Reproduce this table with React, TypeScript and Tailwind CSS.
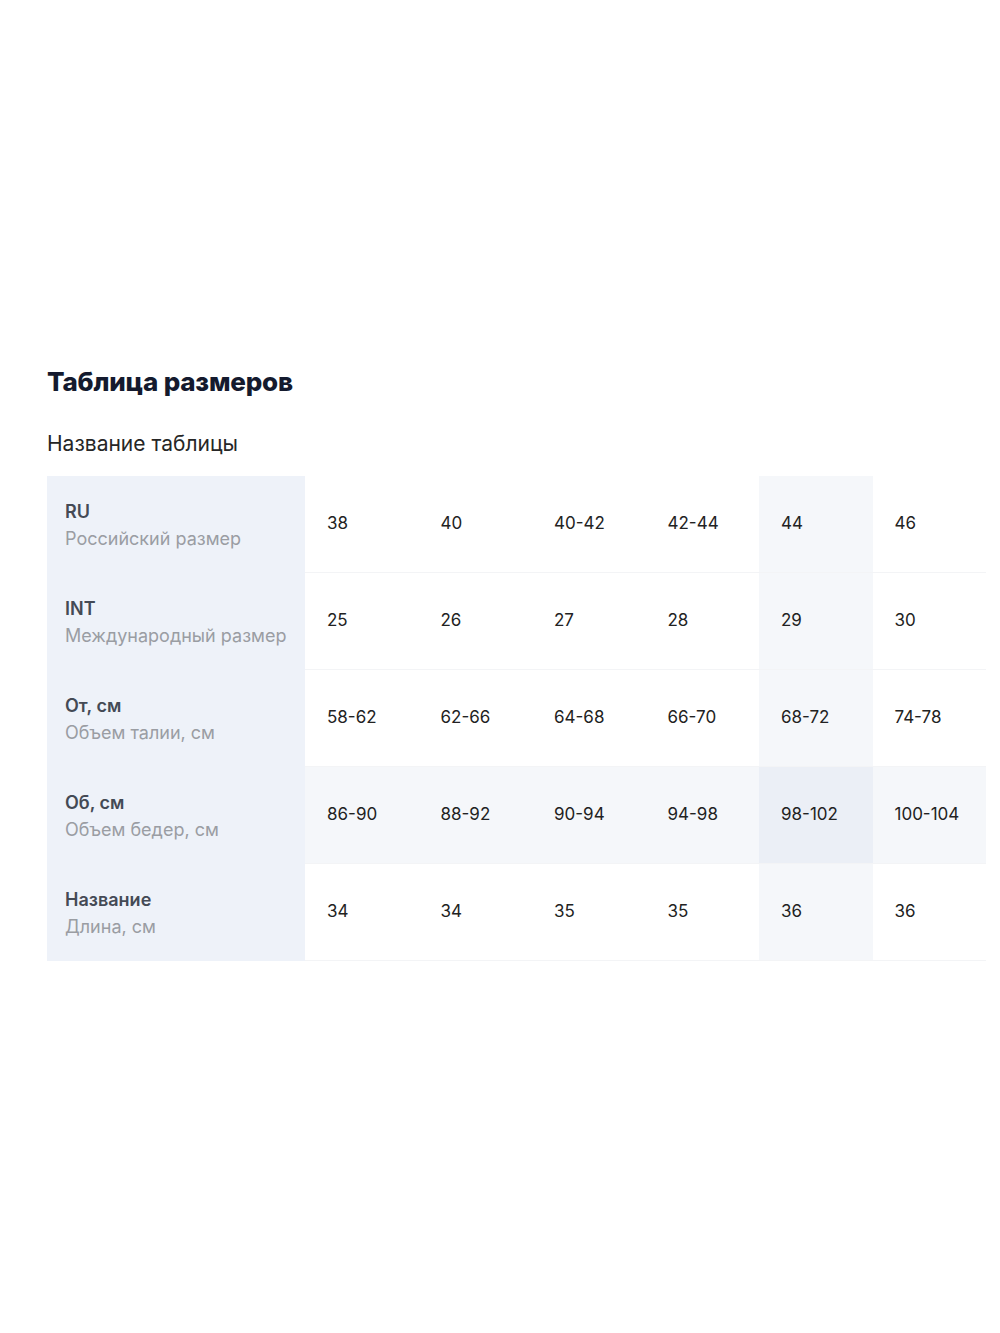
const rows = [
  { title: "RU", sub: "Российский размер", values: ["38", "40", "40-42", "42-44", "44", "46"] },
  { title: "INT", sub: "Международный размер", values: ["25", "26", "27", "28", "29", "30"] },
  { title: "От, см", sub: "Объем талии, см", values: ["58-62", "62-66", "64-68", "66-70", "68-72", "74-78"] },
  { title: "Об, см", sub: "Объем бедер, см", values: ["86-90", "88-92", "90-94", "94-98", "98-102", "100-104"] },
  { title: "Название", sub: "Длина, см", values: ["34", "34", "35", "35", "36", "36"] },
]

const activeRow = 3
const activeCol = 4

function cellBg(r: number, c: number) {
  if (r === activeRow && c === activeCol) return "bg-[#ebeff6]"
  if (r === activeRow || c === activeCol) return "bg-[#f5f7fa]"
  return "bg-white"
}

export default function App() {
  return (
    <div className="min-h-[1333px] w-[1000px] bg-white font-['Inter',sans-serif]">
      <div className="pl-[47px] pr-[14px] pt-[364px]">
        <h1 className="text-[26px] font-extrabold leading-[36px] text-[#141a2e] tracking-[-0.2px]">
          Таблица размеров
        </h1>
        <p className="mt-[30px] text-[21px] leading-[28px] text-[#262626]">Название таблицы</p>

        <div className="mt-[18px] grid grid-cols-[258px_repeat(6,1fr)]">
          {rows.map((row, r) => (
            <div key={row.title} className="contents">
              <div className="flex h-[97px] flex-col justify-center bg-[#eef2f9] pl-[18px]">
                <span className="text-[18px] font-semibold leading-[27px] text-[#444a55]">{row.title}</span>
                <span className="text-[18px] leading-[27px] text-[#9a9da3]">{row.sub}</span>
              </div>
              {row.values.map((v, c) => (
                <div
                  key={c}
                  className={`flex h-[97px] items-center border-b border-[#f3f4f6] pl-[22px] text-[17px] text-[#222] ${cellBg(r, c)}`}
                >
                  {v}
                </div>
              ))}
            </div>
          ))}
        </div>
      </div>
    </div>
  )
}
